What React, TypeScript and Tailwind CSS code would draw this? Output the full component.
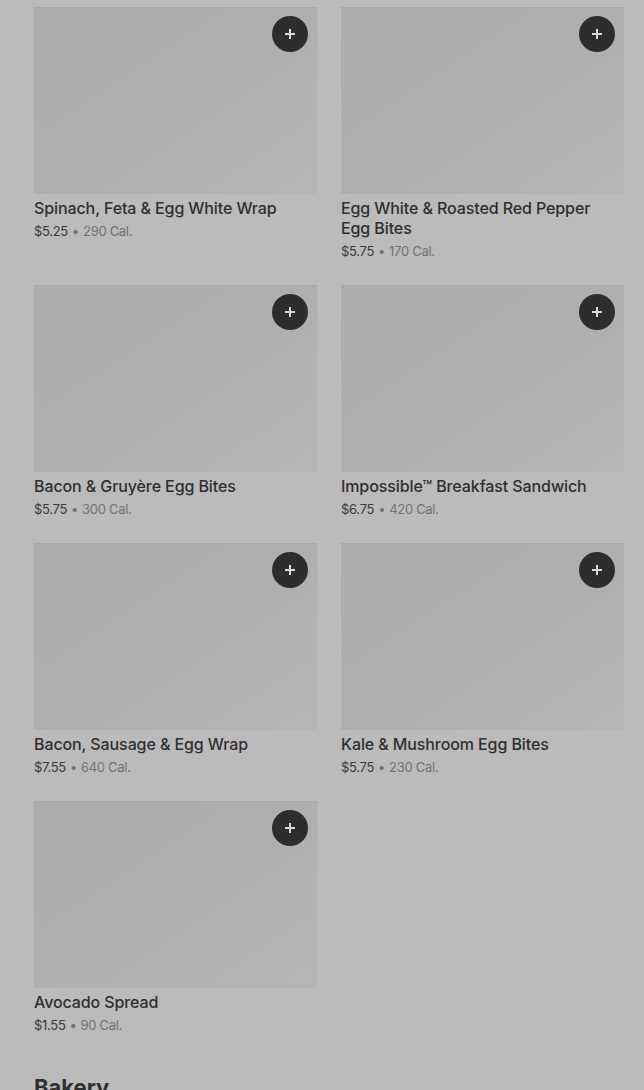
const items = [
  { name: "Spinach, Feta & Egg White Wrap", price: "$5.25", cal: "290 Cal." },
  { name: "Egg White & Roasted Red Pepper Egg Bites", price: "$5.75", cal: "170 Cal." },
  { name: "Bacon & Gruyère Egg Bites", price: "$5.75", cal: "300 Cal." },
  { name: "Impossible™ Breakfast Sandwich", price: "$6.75", cal: "420 Cal." },
  { name: "Bacon, Sausage & Egg Wrap", price: "$7.55", cal: "640 Cal." },
  { name: "Kale & Mushroom Egg Bites", price: "$5.75", cal: "230 Cal." },
  { name: "Avocado Spread", price: "$1.55", cal: "90 Cal." },
];

function PlusIcon() {
  return (
    <svg width="14" height="14" viewBox="0 0 14 14" fill="none">
      <path d="M7 2v10M2 7h10" stroke="#d8d8d8" strokeWidth="2" />
    </svg>
  );
}

function MenuItem({ name, price, cal }: { name: string; price: string; cal: string }) {
  return (
    <div className="flex flex-col">
      <div className="relative h-[187px] w-full bg-gradient-to-br from-[#acacac] via-[#afafaf] to-[#b5b5b5] border-t border-[#a9a9a9]">
        <button className="absolute top-[8px] right-[9px] w-9 h-9 rounded-full bg-[#2d2d2d] flex items-center justify-center">
          <PlusIcon />
        </button>
      </div>
      <div className="mt-1 text-[16px] leading-5 font-medium text-[#2f2f2f] pr-6 tracking-[-0.1px]">{name}</div>
      <div className="mt-[3px] text-[13px] leading-5 text-[#3a3a3a] tracking-[-0.3px]">
        {price}
        <span className="text-[#727272] ml-[4px]">•</span>
        <span className="text-[#727272] ml-[4px]">{cal}</span>
      </div>
    </div>
  );
}

export default function App() {
  return (
    <div className="bg-[#bbbbbb] pt-[7px] pl-[34px] pr-[20px] font-['Inter','Liberation_Sans',sans-serif] overflow-hidden h-[1090px]">
      <div className="grid grid-cols-2 gap-x-6 gap-y-6">
        {items.map((it) => (
          <MenuItem key={it.name} name={it.name} price={it.price} cal={it.cal} />
        ))}
      </div>
      <h2 className="mt-[38px] text-[22px] font-bold text-[#2f2f2f] leading-7">Bakery</h2>
    </div>
  );
}
